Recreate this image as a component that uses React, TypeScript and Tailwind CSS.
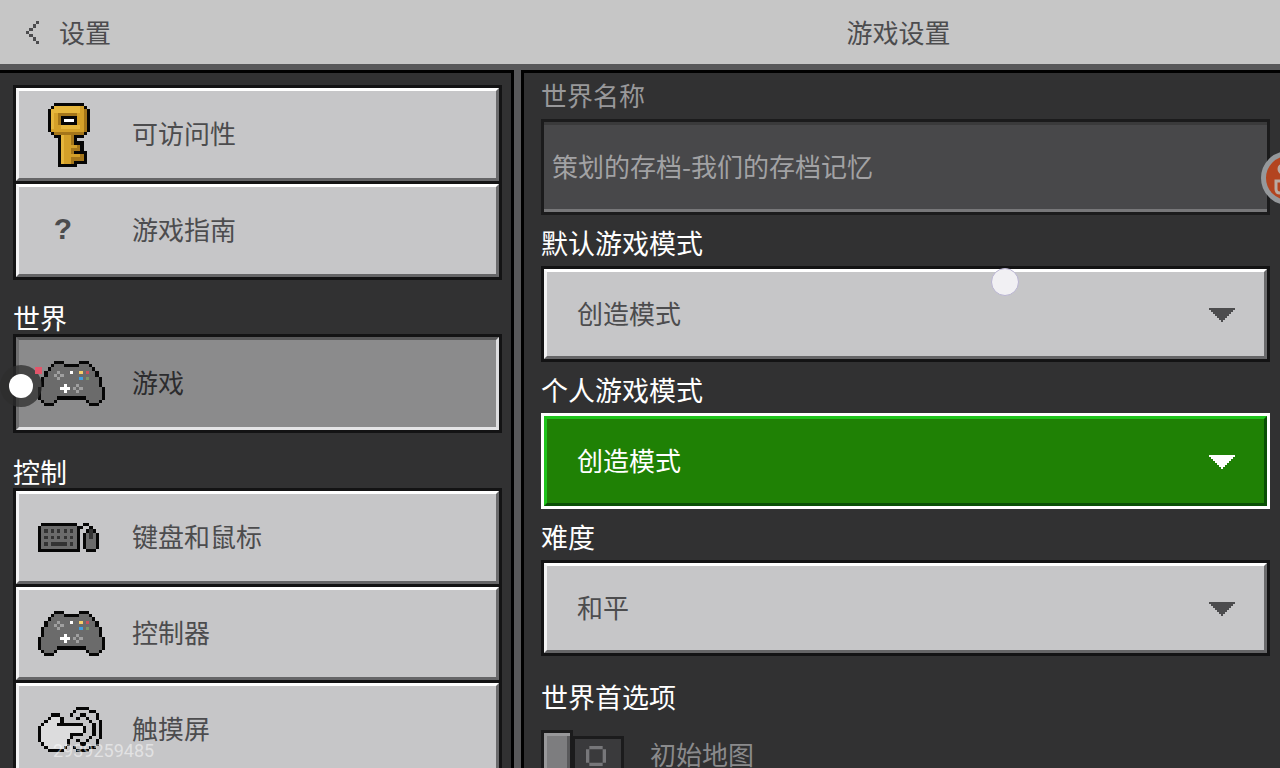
import React, { useState } from 'react';

const palette: Record<string, string> = {
  K: '#060606',
  g: '#6b6b6b',
  L: '#a0a0a0',
  W: '#ffffff',
  Y: '#f6cf6b',
  R: '#c9505c',
  B: '#3f9fe0',
  G: '#7c9468',
  D: '#333333',
  w: '#dcdcdd',
  h: '#e6b63c',
  y: '#d4a029',
  o: '#a5761a',
  c: '#4c4c4e',
};

const keyIcon = [
  '..KKKKKKKKK..',
  '.KhhhhhhhhyK.',
  'KhhhhhhhhhyoK',
  'KhyooooooyyoK',
  'KhyoKKKKKyyoK',
  'KhyoKWWWKyyoK',
  'KhyoKKKKKyyoK',
  'KhyyhhhhhhyoK',
  'KyyyyyyyyyyoK',
  '.KoooooooooK.',
  '..KKhyyoKKK..',
  '...KhyyoK....',
  '...KhyyoKKK..',
  '...KhyyyyoK..',
  '...KhyyoooK..',
  '...KhyyoKKKK.',
  '...KhyyyyyoK.',
  '...KhyyooooK.',
  '...KhyyoKKKK.',
  '...KKKKKK....',
];

const controllerIcon = [
  '.....KKK.....KKK.....',
  '....KgggKKKKKgggK....',
  '...KgggggggggggggK...',
  '..KgggLgggWggYgRggK..',
  '..KggLgLggggggggggK..',
  '.KggggLggggggBgGgggK.',
  '.KgggggggggggggggggK.',
  '.KggggggWgggLggggggK.',
  'KggggggWWWgLgLggggggK',
  'KgggggggWgggLgggggggK',
  'KgggggggggggggggggggK',
  'KgggggKKKKKKKKKgggggK',
  '.KgggK.........KgggK.',
  '..KKK...........KKK..',
];

const keyboardIcon = [
  '.KKKKKKKKKKK..KK...',
  'KgggggggggggKK..K..',
  'KgDgDgDgDgDgK..KDK.',
  'KgggggggggggK.KgDgK',
  'KgDgDgDgDgDgK.KgDgK',
  'KgggggggggggK.KgggK',
  'KgDgDDDDDgDgK.KgggK',
  'KgggggggggggK.KgggK',
  'KKKKKKKKKKKKK..KKK.',
];

const touchIcon = [
  '............KKKK....',
  '...........K....KK..',
  '....KKK...K..KK...K.',
  '...KwwwK....K..K..K.',
  '..KwwwwK........K..K',
  '.KwwwwKKKKKKKK...K.K',
  'KwwwwwwwwwwwwwK..K.K',
  'KwwwwwwwwwwwwwK..K.K',
  'KwwwwwwwwwKKKK...K.K',
  'KwwwwwwwwwK.....K..K',
  'KwwwwwwwwK..K..K..K.',
  '.KwwwwwwwK...KK...K.',
  '..KwwwwwK..K....KK..',
  '...KKKKK....KKKK....',
];

const chevronIcon = ['...c', '..c.', '.c..', 'c...', '.c..', '..c.', '...c'];

interface PixelIconProps {
  rows: string[];
  className: string;
}

const PixelIcon: React.FC<PixelIconProps> = ({ rows, className }) => (
  <svg
    viewBox={`0 0 ${rows[0].length} ${rows.length}`}
    preserveAspectRatio="none"
    shapeRendering="crispEdges"
    aria-hidden="true"
    className={className}
  >
    {rows.map((row, y) =>
      row.split('').map((cell, x) =>
        cell === '.' ? null : <rect key={`${x}-${y}`} x={x} y={y} width="1" height="1" fill={palette[cell]} />
      )
    )}
  </svg>
);

interface NavButtonProps {
  label: string;
  icon: React.ReactNode;
  active?: boolean;
}

const NavButton: React.FC<NavButtonProps> = ({ label, icon, active }) => (
  <button
    type="button"
    aria-current={active ? 'page' : undefined}
    className="-mt-[3px] block w-full border-[3px] border-[#131314] text-left"
  >
    <span
      className={
        active
          ? 'flex h-[93px] items-center gap-[26px] border-[3px] border-t-[#59595a] border-l-[#6f6f70] border-r-[#dedee0] border-b-[#e4e4e6] bg-[#8b8b8c] pl-[19px] text-[#2c2c2e]'
          : 'flex h-[93px] items-center gap-[26px] border-[3px] border-t-white border-l-[#f2f2f3] border-r-[#6a6a6c] border-b-[#656567] bg-[#c6c6c8] pl-[19px] text-[#4c4c4e]'
      }
    >
      <span className="flex w-[68px] shrink-0">{icon}</span>
      <span className="pb-1 leading-8">{label}</span>
    </span>
  </button>
);

interface SelectFieldProps {
  id: string;
  label: string;
  options: string[];
  initial: string;
  highlighted?: boolean;
}

const SelectField: React.FC<SelectFieldProps> = ({ id, label, options, initial, highlighted }) => {
  const [value, setValue] = useState(initial);

  return (
    <div className="mt-[5px]">
      <label htmlFor={id} className="flex h-[46px] items-center text-[27px] text-white">
        {label}
      </label>
      <div className={highlighted ? 'relative border-[3px] border-white' : 'relative border-[3px] border-[#131314]'}>
        <select
          id={id}
          value={value}
          onChange={(e) => setValue(e.target.value)}
          className={
            highlighted
              ? 'block h-[90px] w-full appearance-none rounded-none border-[3px] border-t-[#1fc41c] border-l-[#1fc41c] border-r-[#0a4f06] border-b-[#0a4f06] bg-[#1f8105] px-[30px] pb-1 text-white outline-none'
              : 'block h-[90px] w-full appearance-none rounded-none border-[3px] border-t-white border-l-[#f2f2f3] border-r-[#6a6a6c] border-b-[#656567] bg-[#c6c6c8] px-[30px] pb-1 text-[#4c4c4e] outline-none'
          }
        >
          {options.map((option) => (
            <option key={option}>{option}</option>
          ))}
        </select>
        <svg
          viewBox="0 0 26 14"
          shapeRendering="crispEdges"
          aria-hidden="true"
          className={
            highlighted
              ? 'pointer-events-none absolute top-[39px] right-8 h-3.5 w-[26px] fill-white'
              : 'pointer-events-none absolute top-[39px] right-8 h-3.5 w-[26px] fill-[#4c4c4e]'
          }
        >
          <path d="M0 0H26V2H24V4H22V6H20V8H18V10H16V12H14V14H12V12H10V10H8V8H6V6H4V4H2V2H0Z" />
        </svg>
      </div>
    </div>
  );
};

const gameModes = ['创造模式', '生存模式', '冒险模式'];
const difficulties = ['和平', '简单', '普通', '困难'];

const App: React.FC = () => {
  return (
    <div className="relative flex h-screen flex-col overflow-hidden bg-[#58585a] font-['Noto_Sans_CJK_SC',sans-serif] text-[26px]">
      <header className="grid h-16 shrink-0 grid-cols-[514fr_759fr] items-center gap-x-[7px] bg-[#c6c6c6] text-[#4c4c4e]">
        <button type="button" className="flex items-center gap-5 pl-[26px]">
          <PixelIcon rows={chevronIcon} className="h-[23px] w-[13px]" />
          <span className="leading-8">设置</span>
        </button>
        <h1 className="pr-1 text-center leading-8">游戏设置</h1>
      </header>

      <main className="mt-[6px] grid min-h-0 flex-1 grid-cols-[514fr_759fr] gap-x-[7px] text-white">
        <nav className="overflow-hidden border-t-[3px] border-r-[3px] border-black bg-[#313132] pt-[15px] pr-[9px] pl-[13px]">
          <NavButton label="可访问性" icon={<PixelIcon rows={keyIcon} className="ml-2.5 h-16 w-[42px]" />} />
          <NavButton
            label="游戏指南"
            icon={
              <span className="ml-4 font-['Liberation_Mono',monospace] text-[30px] leading-8 font-bold">?</span>
            }
          />
          <h2 className="mb-[3px] flex h-[54px] items-end text-[27px] leading-8">世界</h2>
          <NavButton
            active
            label="游戏"
            icon={<PixelIcon rows={controllerIcon} className="h-[45px] w-[67px]" />}
          />
          <h2 className="mb-[3px] flex h-[55px] items-end text-[27px] leading-8">控制</h2>
          <NavButton label="键盘和鼠标" icon={<PixelIcon rows={keyboardIcon} className="h-[29px] w-[61px]" />} />
          <NavButton label="控制器" icon={<PixelIcon rows={controllerIcon} className="h-[45px] w-[67px]" />} />
          <NavButton label="触摸屏" icon={<PixelIcon rows={touchIcon} className="h-[45px] w-16" />} />
        </nav>

        <section className="overflow-hidden border-t-[3px] border-l-[3px] border-black bg-[#313132] pr-2.5 pl-[17px]">
          <label htmlFor="world-name" className="flex h-[46px] items-center pb-1 text-[#98989a]">
            世界名称
          </label>
          <div className="border-[3px] border-[#1b1b1c]">
            <input
              id="world-name"
              type="text"
              disabled
              defaultValue="策划的存档-我们的存档记忆"
              className="block h-[90px] w-full border-t-[3px] border-b-[3px] border-t-[#3a3a3b] border-b-[#777779] bg-[#48484a] px-2 pb-1 text-[#a2a2a4]"
            />
          </div>
          <SelectField id="default-mode" label="默认游戏模式" options={gameModes} initial="创造模式" />
          <SelectField id="personal-mode" label="个人游戏模式" options={gameModes} initial="创造模式" highlighted />
          <SelectField id="difficulty" label="难度" options={difficulties} initial="和平" />

          <h2 className="mt-[18px] flex h-[46px] items-center text-[27px]">世界首选项</h2>
          <label className="mt-2.5 flex items-start text-[#8a8a8c]">
            <input type="checkbox" disabled className="sr-only" />
            <span className="h-[58px] w-8 border-[3px] border-[#1b1b1c] bg-[#7d7d7f] shadow-[inset_3px_3px_0_#98989a,inset_-3px_-3px_0_#59595b]" />
            <span className="mt-[6px] -ml-px flex h-10 w-[52px] items-center justify-center border-[3px] border-[#1b1b1c] bg-[#3a3a3c] pr-1">
              <svg viewBox="0 0 6 6" aria-hidden="true" className="h-5 w-5 fill-[#77777a]">
                <path d="M1 0H5V1H1ZM1 5H5V6H1ZM0 1H1V5H0ZM5 1H6V5H5Z" />
              </svg>
            </span>
            <span className="mt-3 ml-[26px] leading-6">初始地图</span>
          </label>
        </section>
      </main>

      {/* floating overlays */}
      <div className="absolute top-[365px] left-0 flex h-[42px] w-[42px] items-center justify-center rounded-full bg-[#2e2e2e]/75">
        <span className="h-6 w-6 rounded-full bg-white" />
        <span className="absolute top-0.5 right-0 h-[7px] w-[7px] bg-[#e2566b]" />
      </div>
      <div className="absolute top-[268px] left-[991px] h-7 w-7 rounded-full border border-[#b9b4d2] bg-[#f1f0f3]" />
      <svg viewBox="0 0 54 54" aria-hidden="true" className="absolute top-[151px] -right-[35px] h-[54px] w-[54px]">
        <circle cx="27" cy="27" r="24.5" fill="#b3441f" stroke="#95989b" strokeWidth="5" />
        <circle cx="22" cy="18" r="4" fill="none" stroke="#b9aaa2" strokeWidth="3" />
        <path d="M15 30H24V42H19Q15 42 15 38Z" fill="none" stroke="#b9aaa2" strokeWidth="3" />
      </svg>
      <p className="pointer-events-none absolute top-[741px] left-[53px] font-['Roboto',sans-serif] text-[18px] leading-5 text-white/50">
        2939259485
      </p>
    </div>
  );
};

export default App;
